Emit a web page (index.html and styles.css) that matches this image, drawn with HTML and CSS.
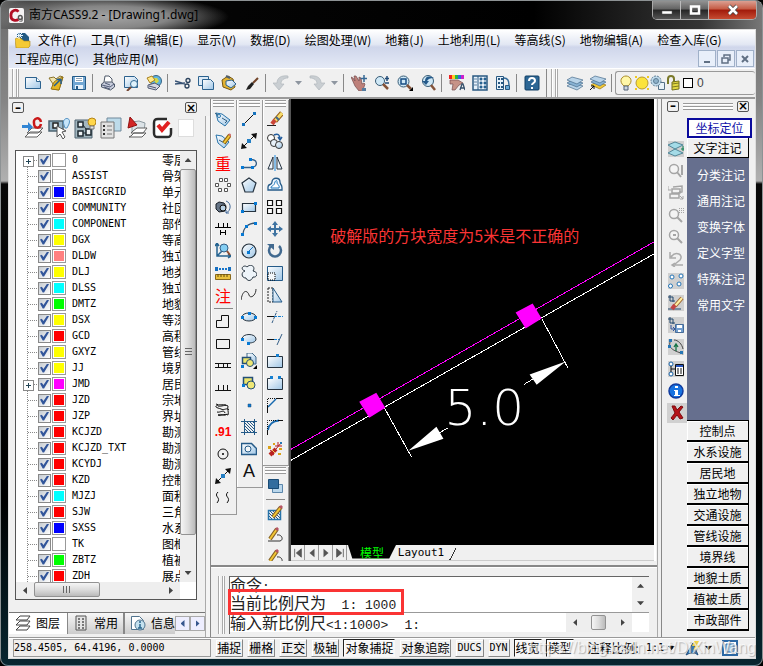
FILE: index.html
```html
<!DOCTYPE html>
<html lang="zh-CN">
<head>
<meta charset="utf-8">
<title>南方CASS9.2 - [Drawing1.dwg]</title>
<link rel="stylesheet" href="styles.css">
</head>
<body>
<svg class="sprite" width="0" height="0" aria-hidden="true">
  <defs>
    <linearGradient id="gl" x1="0" y1="0" x2="1" y2="1"><stop offset="0" stop-color="#ffffff"/><stop offset="1" stop-color="#9fc6e6"/></linearGradient>
    <linearGradient id="gy" x1="0" y1="0" x2="1" y2="1"><stop offset="0" stop-color="#fff3a0"/><stop offset="1" stop-color="#d8a818"/></linearGradient>
    <pattern id="hatch" width="3" height="3" patternUnits="userSpaceOnUse"><path d="M0 0l3 3" stroke="#245a88" stroke-width="1"/></pattern>
  </defs>
  <symbol id="new" viewBox="0 0 16 16"><path d="M.5 2.500h11l4 4v7H.5z" fill="url(#gl)" stroke="#2c628f"/><path d="M11.500 2.500v4h4" fill="#fff" stroke="#2c628f"/></symbol>
  <symbol id="open" viewBox="0 0 16 16"><path d="M1 3l5-1 2 2 4-3 3 1-4 13-7-1 1-5z" fill="#f1e5ae" stroke="#8a732c"/><path d="M3 14l3-7 4-3 5-2-4 13z" fill="#e5b622" stroke="#8d6a0e" stroke-width=".8"/><path d="M6 11l6-6M8.500 4.500H13V9" fill="none" stroke="#225e94" stroke-width="1.500"/></symbol>
  <symbol id="save" viewBox="0 0 16 16"><path d="M1.500 1.500h13v13h-13z" fill="#72a7d3" stroke="#235a87"/><path d="M4 2h8v5H4z" fill="#fff"/><path d="M5 3.500h6M5 5.500h6" stroke="#8fa4b5"/><path d="M4 10h8v4H4z" fill="#e7f2fb"/><path d="M5 11h2v3H5z" fill="#235a87"/></symbol>
  <symbol id="print" viewBox="0 0 16 16"><path d="M4 7l1-6h4l3 3v4" fill="#fff" stroke="#4e5969"/><path d="M1.500 9l3-2h7l3 2v3l-4 3-9-3z" fill="#c9cedd" stroke="#4e5969"/><path d="M2 10l8 2 4-3M4 12l6 2M5 8l5 2" fill="none" stroke="#525c78"/></symbol>
  <symbol id="preview" viewBox="0 0 16 16"><path d="M1.500 1.500h10l3 3v8h-13z" fill="url(#gl)" stroke="#2c628f"/><circle cx="11" cy="9" r="3.500" fill="#dff2fc" stroke="#346a93"/><path d="M8 12l-4 4" stroke="#754632" stroke-width="2"/></symbol>
  <symbol id="publish" viewBox="0 0 16 16"><circle cx="10" cy="6" r="5.500" fill="#5fb2dc" stroke="#386485"/><path d="M7 3l4 0 2 3-3 3" fill="#d2d846"/><path d="M1 3l5-2 3 4-5 3z" fill="#ffe98b" stroke="#a9811f"/><path d="M2 10l7-2 5 3-4 4-8-2z" fill="#d5d7e2" stroke="#4d5770"/><path d="M3 11l7 2" stroke="#4d5770"/></symbol>
  <symbol id="cut" viewBox="0 0 16 16"><path d="M0 6l10 3M0 9l10-1" stroke="#385375" stroke-width="1.500"/><circle cx="13" cy="5.500" r="2" fill="none" stroke="#29415c" stroke-width="1.300"/><circle cx="12" cy="11" r="2" fill="none" stroke="#29415c" stroke-width="1.300"/></symbol>
  <symbol id="copy" viewBox="0 0 16 16"><path d="M.5 1.500h10v9H.5z" fill="#dceaf6" stroke="#2c628f"/><path d="M4.500 4.500h8l3 3v7h-11z" fill="url(#gl)" stroke="#2c628f"/></symbol>
  <symbol id="paste" viewBox="0 0 16 16"><path d="M1 5l6-4 5 3 2 8-4 3-8-3z" fill="#e3b332" stroke="#775711"/><path d="M5 1l4 2" stroke="#506070" stroke-width="2"/><path d="M5 6l6-1 4 4-5 4-5-3z" fill="url(#gl)" stroke="#2c628f"/></symbol>
  <symbol id="brush" viewBox="0 0 16 16"><path d="M14 3L9 8" stroke="#714429" stroke-width="2"/><path d="M8 7l2 2-4 5-4 1 2-4z" fill="#202020"/></symbol>
  <symbol id="undo" viewBox="0 0 16 16"><path d="M15 1C8 0 4 3 4 8H0l6 7 5-6H8c0-4 3-6 7-6z" fill="#c9ced2" stroke="#b2b8bd" stroke-width=".7"/></symbol>
  <symbol id="redo" viewBox="0 0 16 16"><path d="M1 1c7-1 11 2 11 7h4l-6 7-5-6h3c0-4-3-6-7-6z" fill="#c9ced2" stroke="#b2b8bd" stroke-width=".7"/></symbol>
  <symbol id="pan" viewBox="0 0 16 16"><path d="M0 2l2 1 2 3L3 1h2l3 5V2l2 1 1 6 2-1 1 1-2 6-4 1-4-5z" fill="#bd807a" stroke="#744c4d" stroke-width=".7"/><path d="M13 0v7M9.500 3.500h7" stroke="#356895" stroke-width="1.500"/><path d="M11 13l4 0v3h-4z" fill="#537ca0"/></symbol>
  <symbol id="zoomrt" viewBox="0 0 16 16"><circle cx="6" cy="6" r="4.500" fill="#cfe8f6" stroke="#385c76"/><path d="M9 9l5 5" stroke="#845339" stroke-width="2.500"/><path d="M13 1v5M11 3.500h4M11 8h4" stroke="#214b78" stroke-width="1.500"/></symbol>
  <symbol id="zoomwin" viewBox="0 0 16 16"><circle cx="6.500" cy="6.500" r="5.500" fill="#cfe8f6" stroke="#385c76"/><path d="M4 4h5v5H4z" fill="none" stroke="#174c83" stroke-width="1.500"/><path d="M10 10l4 4" stroke="#845339" stroke-width="2.500"/><path d="M16 12v4h-4z" fill="#000"/></symbol>
  <symbol id="zoomprev" viewBox="0 0 16 16"><circle cx="8" cy="6" r="5.500" fill="#cfe8f6" stroke="#385c76"/><path d="M14 3C8 0 5 2 5 6H2l4 4 3-4H7c1-2 3-3 7-3z" fill="#245a8a"/><path d="M11 10l4 5" stroke="#845339" stroke-width="2.500"/></symbol>
  <symbol id="props" viewBox="0 0 16 16"><path d="M0 0h3v4H0z" fill="#e22"/><path d="M3 0h3v4H3z" fill="#fc2"/><path d="M6 0h3v4H6z" fill="#2b4"/><path d="M9 0h3v4H9z" fill="#36d"/><path d="M12 0h3v4h-3z" fill="#c2c"/><path d="M1 5h8l5 3-4 2-4 5H3l1-6-3 0z" fill="#c79387" stroke="#744c4d" stroke-width=".7"/><path d="M11 15l2-6h1l2 6m-5-2h4" fill="none" stroke="#35506b" stroke-width="1.300"/></symbol>
  <symbol id="dcenter" viewBox="0 0 16 16"><path d="M1 1h14v14H1z" fill="#e6f2fb" stroke="#285881" stroke-width="1.500"/><path d="M6 1v14" stroke="#285881"/><path d="M2 4h3M2 7h3M2 10h3M8 3h2v2H8zm4 0h2v2h-2zM8 7h2v2H8zm4 0h2v2h-2zM8 11h2v2H8zm4 0h2v2h-2z" fill="#2370a5" stroke="#285881" stroke-width=".7"/></symbol>
  <symbol id="palettes" viewBox="0 0 16 16"><path d="M1.500 1.500h7v13h-7z" fill="#e6f2fb" stroke="#285881"/><path d="M3 4h2M3 8h2M3 12h2M6 4h2M6 8h2M6 12h2" stroke="#285881" stroke-width="2"/><path d="M9 3c4 0 5 3 5 7" fill="none" stroke="#346c9a" stroke-width="1.500"/><path d="M10.500 10.500h4v4h-4z" fill="#69a9d4" stroke="#285881"/></symbol>
  <symbol id="help" viewBox="0 0 16 16"><rect x="1" y="1" width="14" height="14" rx="1" fill="#2d6795" stroke="#103e65"/><path d="M5 6c0-4 6-4 6 0 0 2-3 2-3 4" fill="none" stroke="#fff" stroke-width="2"/><path d="M7 12h2v2H7z" fill="#fff"/></symbol>
  <symbol id="layers" viewBox="0 0 16 16"><path d="M0 11l5-3 11 3-6 4z" fill="#b9d4e9" stroke="#496d8d" stroke-width=".7"/><path d="M0 8l5-3 11 3-6 4z" fill="#87b2d3" stroke="#496d8d" stroke-width=".7"/><path d="M0 5l5-3 11 3-6 4z" fill="#b9d4e9" stroke="#496d8d" stroke-width=".7"/></symbol>
  <symbol id="layerstate" viewBox="0 0 16 16"><path d="M1 10l5-3 10 3-6 4z" fill="#f5c933" stroke="#957514" stroke-width=".7"/><path d="M1 7l5-3 10 3-6 4z" fill="#87b2d3" stroke="#496d8d" stroke-width=".7"/><path d="M0 4l5-3 11 3-6 4z" fill="#b9d4e9" stroke="#496d8d" stroke-width=".7"/><path d="M0 15l4-4m-3 0h3v3" stroke="#111" fill="none"/></symbol>
  <symbol id="bulb" viewBox="0 0 16 16"><path d="M6 11C0 6 4 1 8 1s8 5 2 10z" fill="#fff7a8" stroke="#a88b28"/><path d="M6 11h4v4H6z" fill="#cfd8e1" stroke="#526276"/></symbol>
  <symbol id="sun" viewBox="0 0 16 16"><path d="M1 1h2v2H1zm12 0h2v2h-2zM1 13h2v2H1zm12 0h2v2h-2z" fill="#f0ca20"/><circle cx="8" cy="8" r="6" fill="#fbe33c" stroke="#b89b31"/></symbol>
  <symbol id="freeze" viewBox="0 0 16 16"><path d="M8.500 7.500h6v7h-6z" fill="#e9f2f8" stroke="#547087"/><circle cx="6" cy="6" r="5" fill="#bdd9eb" stroke="#5e7d94" stroke-dasharray="2 1"/><circle cx="6" cy="6" r="2.500" fill="#8db1c9" stroke="#5e7d94"/></symbol>
  <symbol id="lock" viewBox="0 0 16 16"><path d="M2 9V4c0-4 6-4 6 0v4" fill="none" stroke="#7a792a" stroke-width="2"/><path d="M6 7l7-1v8l-7 1z" fill="#e2d843" stroke="#74711c"/><path d="M6 9l7-1M6 12l7-1" stroke="#807c23"/></symbol>

  <symbol id="tag" viewBox="0 0 16 16"><path d="M1 2l6 1 8 6-5 6-7-5z" fill="url(#gl)" stroke="#2874aa"/><circle cx="4" cy="5" r="1.500" fill="#fff" stroke="#2874aa"/><path d="M7 7l5 3-2 2M0 2l3 2" fill="none" stroke="#315d7d"/></symbol>
  <symbol id="tagedit" viewBox="0 0 16 16"><path d="M1 2l6 1 7 6-5 6-6-5z" fill="url(#gl)" stroke="#2874aa"/><path d="M4 7l7 4" stroke="#315d7d"/><path d="M15 2L9 10" stroke="#8c620c" stroke-width="4"/><path d="M15 2L9 10" stroke="#f2c635" stroke-width="2"/><path d="M14 1l2 2" stroke="#cf6d6c" stroke-width="2"/></symbol>
  <symbol id="ring" viewBox="0 0 16 16"><path d="M4.500 1.500h3v3h-3zm5 0h3v3h-3zM.5 6.500h3v3h-3zm12 0h3v3h-3zM3.500 11.500h3v3h-3zm6 0h3v3h-3z" fill="#fff" stroke="#555"/></symbol>
  <symbol id="camera" viewBox="0 0 16 16"><path d="M1 5l3-2 5 1 2 3-1 5-6 1-3-3z" fill="#657486" stroke="#171d25"/><circle cx="8" cy="9" r="3" fill="#b9d2e6" stroke="#111"/><path d="M11 2c6 2 5 10 0 12m0-3v3h3" fill="none" stroke="#456b9a"/></symbol>
  <symbol id="spacing" viewBox="0 0 16 16"><path d="M0 6.500h16M3.500 2v5M8.500 2v5M12.500 2v5M5.500 9v5M10.500 9v5M5 11.500h6" stroke="#000" fill="none"/></symbol>
  <symbol id="ucszoom" viewBox="0 0 16 16"><path d="M2 1v12h13M0 3l2-3 2 3m9 8l3 2-3 2M2 13l6-6" stroke="#246390" fill="none" stroke-width="1.500"/><circle cx="9" cy="5" r="4" fill="#83cef3" stroke="#345e85"/><path d="M12 8l3 4" stroke="#8e4f34" stroke-width="2"/></symbol>
  <symbol id="ruler" viewBox="0 0 16 16"><path d="M1 4h14" stroke="#1474cb" stroke-width="2" stroke-dasharray="2 1"/><path d="M0 2h3v4H0zM13 2h3v4h-3z" fill="#176fc0"/><path d="M.5 9.500h15v5H.5z" fill="#ebc23d" stroke="#89691b"/><path d="M3 9v3m3-3v3m3-3v3m3-3v3" stroke="#654c0a"/></symbol>
  <symbol id="lshape" viewBox="0 0 16 16"><path d="M1.500 6.500h5v-5h7v12h-12z" fill="none" stroke="#111"/></symbol>
  <symbol id="box" viewBox="0 0 16 16"><path d="M1.500 3.500h13v9h-13z" fill="none" stroke="#111"/></symbol>
  <symbol id="rail" viewBox="0 0 16 16"><path d="M0 5.500h16M0 9.500h16M3.500 5v5M8.500 5v5M12.500 5v5" stroke="#111" fill="none"/></symbol>
  <symbol id="ticks" viewBox="0 0 16 16"><path d="M0 10.500h16M3.500 5v5M8.500 5v5M12.500 5v5" stroke="#111" fill="none"/></symbol>
  <symbol id="scribble" viewBox="0 0 16 16"><path d="M1 2c3 2 7 0 10 1M3 4c3 1 8-2 10 0-1 3 1 6 0 9-4-2-7 2-10 0 4-2 6 2 9-1M3 3c-5 2 0 3 3 4 3 2 6-2 8 1M2 10c3 1 7-3 8 1" stroke="#111" fill="none"/></symbol>
  <symbol id="pointcircle" viewBox="0 0 16 16"><circle cx="8" cy="8" r="5" fill="none" stroke="#111"/><circle cx="8" cy="8" r="1" fill="#000"/></symbol>
  <symbol id="xline" viewBox="0 0 16 16"><path d="M1 15L15 1" stroke="#111"/><path d="M0 16l1-6 5 5zM16 0l-1 6-5-5z" fill="#111"/><path d="M6 6h4v4H6z" fill="#247fc4"/></symbol>
  <symbol id="wave" viewBox="0 0 16 16"><path d="M3 2c-5 5 4 5-1 11M13 2c-5 5 4 5-1 11" stroke="#111" fill="none"/></symbol>
  <symbol id="line" viewBox="0 0 16 16"><path d="M2 14L14 2" stroke="#111"/><path d="M1 12h3v3H1zM12 1h3v3h-3z" fill="#1773be"/></symbol>
  <symbol id="pline" viewBox="0 0 16 16"><path d="M2 12.500h9c6-1 6-8-1-8" stroke="#365f87" stroke-width="1.300" fill="none"/><path d="M0 11h3v3H0zM10 11h3v3h-3zM8 3h3v3H8z" fill="#0779d4"/></symbol>
  <symbol id="polygon" viewBox="0 0 16 16"><path d="M8 1l7 5-3 9H4L1 6z" fill="url(#gl)" stroke="#26333f" stroke-width="1.200"/></symbol>
  <symbol id="rect" viewBox="0 0 16 16"><path d="M1.500 4.500h13v8h-13z" fill="url(#gl)" stroke="#26333f" stroke-width="1.200"/><path d="M0 11h3v3H0zM13 3h3v3h-3z" fill="#0779d4"/></symbol>
  <symbol id="arc" viewBox="0 0 16 16"><path d="M2 14C2 7 7 2 15 2" fill="none" stroke="#38536d" stroke-width="1.300"/><path d="M0 12h3v3H0zM4 4h3v3H4zM13 1h3v3h-3z" fill="#0779d4"/></symbol>
  <symbol id="circle" viewBox="0 0 16 16"><circle cx="8" cy="8" r="7" fill="url(#gl)" stroke="#26333f" stroke-width="1.200"/><path d="M7 9l5-5" stroke="#1773be"/><path d="M6 8h3v3H6z" fill="#0779d4"/></symbol>
  <symbol id="cloud" viewBox="0 0 16 16"><path d="M4 6C-2 4 3-1 6 2c4-4 9 0 6 4 6 1 4 7 0 6-2 5-6 4-7 1-5 0-5-6-1-7z" fill="#eef4f9" stroke="#26333f"/></symbol>
  <symbol id="spline" viewBox="0 0 16 16"><path d="M0 13C2 1 7 4 8 8s7 1 7-6" fill="none" stroke="#333"/></symbol>
  <symbol id="ellipse" viewBox="0 0 16 16"><ellipse cx="8" cy="8" rx="7" ry="4" fill="url(#gl)" stroke="#26333f"/><path d="M0 7h3v3H0zM13 7h3v3h-3zM7 3h3v3H7z" fill="#0779d4"/></symbol>
  <symbol id="ellarc" viewBox="0 0 16 16"><path d="M1 8c0-6 14-6 14 0 0 3-4 4-7 4" fill="url(#gl)" stroke="#26333f"/><path d="M0 7h3v3H0zM6 11h3v3H6z" fill="#0779d4"/></symbol>
  <symbol id="insert" viewBox="0 0 16 16"><path d="M6 0h5l4 4v7H6z" fill="url(#gl)" stroke="#406988"/><path d="M1.500 4.500h8v6h-8z" fill="#ece56a" stroke="#244f77" stroke-width="1.500"/><circle cx="9" cy="10" r="3.500" fill="#eee775" stroke="#244f77"/><path d="M0 12h3v3H0z" fill="#0779d4"/><path d="M16 12v4h-4z" fill="#000"/></symbol>
  <symbol id="block" viewBox="0 0 16 16"><path d="M2.500 2.500h9v7h-9z" fill="#ece56a" stroke="#244f77" stroke-width="1.500"/><circle cx="10" cy="10" r="4" fill="#eee775" stroke="#244f77"/><path d="M1 9h3v3H1z" fill="#0779d4"/></symbol>
  <symbol id="point" viewBox="0 0 16 16"><path d="M7 7h3v3H7z" fill="#0779d4" stroke="#244f77" stroke-width=".5"/></symbol>
  <symbol id="hatchicon" viewBox="0 0 16 16"><path d="M3 3h10v10H3z" fill="url(#hatch)"/><path d="M0 2.500h16M0 13.500h16M3.500 0v16M13.500 0v16" stroke="#245a88"/></symbol>
  <symbol id="region" viewBox="0 0 16 16"><path d="M.5 2.500h10l5 5v6H.5z" fill="url(#gl)" stroke="#245a88" stroke-width="1.500"/><circle cx="7" cy="8" r="3" fill="#f3f7fa" stroke="#245a88"/></symbol>
  <symbol id="erase" viewBox="0 0 16 16"><path d="M0 14.500h9" stroke="#222"/><path d="M15 2l-7 8" stroke="#965e15" stroke-width="5"/><path d="M15 2l-7 8" stroke="#f7dc69" stroke-width="3"/><path d="M8 9l-3 4" stroke="#ca4537" stroke-width="4"/><path d="M9 6l3 3" stroke="#43698e" stroke-width="2"/></symbol>
  <symbol id="copyobj" viewBox="0 0 16 16"><circle cx="4" cy="5" r="3.500" fill="#fff" stroke="#333"/><circle cx="7" cy="10" r="3.500" fill="#e8f1f9" stroke="#333"/><circle cx="12" cy="12" r="3.500" fill="url(#gl)" stroke="#333"/><path d="M7 2c4-2 6 0 6 4m-2-2l2 3 2-3" fill="none" stroke="#235d9d" stroke-width="1.500"/></symbol>
  <symbol id="mirror" viewBox="0 0 16 16"><path d="M6 2v12H1zM10 2v12h5z" fill="#eef6ff" stroke="#26333f"/><path d="M8 0v16" stroke="#1b88df"/></symbol>
  <symbol id="offset" viewBox="0 0 16 16"><path d="M1 13V10c0-4 4-1 4-5 0-5 8-5 8 0 0 3 2 2 2 6v2z" fill="#eef6ff" stroke="#245a88" stroke-width="1.300"/><path d="M4 11c0-3 3-1 4-6 1-2 2-2 2 0 0 4 3 2 2 6z" fill="#fff" stroke="#1975bc"/></symbol>
  <symbol id="array" viewBox="0 0 16 16"><path d="M.5 1.500h5v5h-5zm9 0h5v5h-5zm-9 8h5v5h-5zm9 0h5v5h-5z" fill="#fff" stroke="#111" stroke-width="1.200"/></symbol>
  <symbol id="move" viewBox="0 0 16 16"><path d="M8 0l3 4H9v3h3V5l4 3-4 3V9H9v3h2l-3 4-3-4h2V9H4v2L0 8l4-3v2h3V4H5z" fill="#3e73a1"/></symbol>
  <symbol id="rotate" viewBox="0 0 16 16"><path d="M4 3a6 6 0 1 0 8 0" fill="none" stroke="#41698f" stroke-width="2.500"/><path d="M0 1h7v6z" fill="#41698f"/></symbol>
  <symbol id="scale" viewBox="0 0 16 16"><path d="M.5 1.500h15v14H.5z" fill="url(#gl)" stroke="#245a88"/><path d="M1 8h7v7H1z" fill="#f3f7fa" stroke="#000" stroke-dasharray="1 1"/></symbol>
  <symbol id="stretch" viewBox="0 0 16 16"><path d="M1 1h5v14H1z" fill="none" stroke="#222" stroke-dasharray="2 1"/><path d="M6 1l9 14H6z" fill="url(#gl)" stroke="#245a88"/></symbol>
  <symbol id="trim" viewBox="0 0 16 16"><path d="M0 7.500h7" stroke="#111"/><path d="M7 7.500h9" stroke="#1680d1" stroke-dasharray="3 1"/><path d="M5 14l5-12" stroke="#365f87" stroke-dasharray="3 1"/></symbol>
  <symbol id="extend" viewBox="0 0 16 16"><path d="M0 8.500h7" stroke="#111"/><path d="M7 8.500h5" stroke="#1680d1" stroke-dasharray="3 1"/><path d="M10 14l5-11" stroke="#365f87"/></symbol>
  <symbol id="breakpt" viewBox="0 0 16 16"><path d="M.5 3.500h15v11H.5z" fill="url(#gl)" stroke="#26333f"/><path d="M9 1h3v3H9z" fill="#1680d1"/></symbol>
  <symbol id="break" viewBox="0 0 16 16"><path d="M3 3.500H.5v11h15v-11H13" fill="url(#gl)" stroke="#26333f"/><path d="M3 1h3v3H3zM11 1h3v3h-3z" fill="#1680d1"/></symbol>
  <symbol id="chamfer" viewBox="0 0 16 16"><path d="M1 10l8-8" fill="none" stroke="#1769ae" stroke-width="1.500"/><path d="M.5 16V9M9 1.500h7" stroke="#111"/><path d="M.5 9V1.500H9" fill="none" stroke="#111" stroke-dasharray="1 1"/></symbol>
  <symbol id="fillet" viewBox="0 0 16 16"><path d="M1 11C2 5 5 2 12 1.500" fill="none" stroke="#1769ae" stroke-width="1.800"/><path d="M.5 16v-5M11 1.500h5" stroke="#111"/><path d="M.5 10V1.500H9" fill="none" stroke="#111" stroke-dasharray="1 1"/></symbol>
  <symbol id="explode" viewBox="0 0 16 16"><path d="M3 14l6-6" stroke="#bc261e" stroke-width="4"/><path d="M1 5h3v3H1zM6 2h2v2H6zM12 7h3v2h-3zM11 12h3v2h-3z" fill="#dba117"/><path d="M9 8l5-6M11 1v4M8 5h7M4 12l3 2M3 9l4 3" stroke="#b51b23"/><path d="M5 9l3 3" stroke="#f5d05c"/><path d="M13 1h2v2h-2z" fill="#2478b5"/></symbol>
  <symbol id="order" viewBox="0 0 16 16"><path d="M5.500 6.500h10v8h-10z" fill="#bad7ec" stroke="#5b86aa"/><path d="M1.500 1.500h10v9h-10z" fill="#336d9e" stroke="#194b75"/></symbol>
  <symbol id="hatchedit" viewBox="0 0 16 16"><path d="M1.500 5.500h12v9h-12z" fill="url(#hatch)" stroke="#2874aa" stroke-width="1.500"/><path d="M14 2L6 12" stroke="#846124" stroke-width="4"/><path d="M14 2L6 12" stroke="#f2c635" stroke-width="2"/><path d="M13 1l2 2" stroke="#b65565" stroke-width="3"/></symbol>
  <symbol id="pedit" viewBox="0 0 16 16"><path d="M1 14h12c4-1 2-7-3-6" fill="none" stroke="#333"/><path d="M10 2L3 12" stroke="#846124" stroke-width="4"/><path d="M10 2L3 12" stroke="#f2c635" stroke-width="2"/><path d="M9 1l2 2" stroke="#b65565" stroke-width="3"/></symbol>

  <symbol id="layerc" viewBox="0 0 22 22"><path d="M6 15l4-4h11l-5 5H5zM4 19l4-4h12l-5 5H3z" fill="#fff" stroke="#606060"/><path d="M0 8h6V5l5 5-5 4v-3H0z" fill="#3185d4"/><path d="M19 5c-1-6-8-4-7 1 0 6 6 6 7 1" fill="none" stroke="#c91818" stroke-width="2.500"/></symbol>
  <symbol id="pickbulb" viewBox="0 0 22 22"><path d="M1 4h14v10H1z" fill="#9ab8cb" stroke="#4d6472" stroke-width="1.500"/><path d="M5 6h5v5H5z" fill="#f0f4f5" stroke="#222" stroke-width="1.500"/><path d="M9 9v11l3-3 3 5 2-2-3-5 4-1z" fill="#fff" stroke="#555"/><path d="M16 8c-3-8 8-9 5-1l-2 4h-2z" fill="#c6e5fa" stroke="#5290c0"/></symbol>
  <symbol id="boxbulb" viewBox="0 0 22 22"><path d="M1 3h17v18H1z" fill="#a3b7c0" stroke="#506572"/><path d="M4 5h5v5H4zM4 14h5v5H4zM12 12h5v6h-5z" fill="#edf2f4" stroke="#1d2930" stroke-width="1.500"/><path d="M9 8l3 4M9 16h3" stroke="#1d2930"/><circle cx="18" cy="5" r="4" fill="#ffd64a" stroke="#b48315"/><path d="M16 9h4v3h-4z" fill="#e1e1e1" stroke="#777"/></symbol>
  <symbol id="sheet" viewBox="0 0 22 22"><path d="M7 1h14v13H7z" fill="#bddbea" stroke="#71899b"/><path d="M1 5h13v16H1z" fill="#e2e2e2" stroke="#777"/><path d="M3 9h2M3 13h2M3 17h2" stroke="#333" stroke-width="2"/><path d="M7 9h5M7 13h5M7 17h5" stroke="#777"/></symbol>
  <symbol id="redlayer" viewBox="0 0 22 22"><path d="M6 5l7-1 6 2-1 9H6z" fill="#dce3e7" stroke="#8d9aa1"/><path d="M4 0l7 8-9 3z" fill="#d22626" stroke="#8f1212"/><path d="M7 14l4-3h10l-4 5H5zM5 19l3-3h12l-4 4H3z" fill="#fff" stroke="#606060"/></symbol>
  <symbol id="bigcheck" viewBox="0 0 22 22"><path d="M19 11v5c0 3-1 4-4 4H6c-3 0-4-1-4-4V6c0-3 1-4 4-4h9" fill="#fff" stroke="#2c2c2c" stroke-width="2.500"/><path d="M6 8l4 5 7-8" fill="none" stroke="#e12222" stroke-width="4"/></symbol>

  <symbol id="r1" viewBox="0 0 16 16"><path d="M0 0h16v16H0z" fill="#d0d0d0"/><path d="M0 4l7-3 8 3-8 4zM0 12l7-4 8 4-8 3z" fill="#a4dbe7" stroke="#528697"/><path d="M15 5v5M13 8h3" stroke="#0c8051"/></symbol>
  <symbol id="r2" viewBox="0 0 16 16"><circle cx="6" cy="6" r="4.500" fill="#f4f4f4" stroke="#a5a5a5" stroke-width="1.500"/><path d="M9 9l4 5M14 2v10" stroke="#a5a5a5" stroke-width="2"/></symbol>
  <symbol id="r3" viewBox="0 0 16 16"><path d="M5 2l9-1v6l-4 1M4 4h8v4H4zM2 9h9v4H2z" fill="#f4f4f4" stroke="#a5a5a5" stroke-width="1.500"/><path d="M0 1v4h3M12 11l3 3v-3m0 3h-3" stroke="#a5a5a5" fill="none"/></symbol>
  <symbol id="r4" viewBox="0 0 16 16"><circle cx="6" cy="7" r="4.500" fill="#f4f4f4" stroke="#a5a5a5" stroke-width="1.500"/><path d="M9 10l5 5" stroke="#a5a5a5" stroke-width="2"/><path d="M11 1.500h5M11 3.500h5M11 5.500h5" stroke="#a5a5a5" stroke-dasharray="1 1"/></symbol>
  <symbol id="r5" viewBox="0 0 16 16"><circle cx="6" cy="6" r="4.500" fill="#f4f4f4" stroke="#a5a5a5" stroke-width="1.500"/><path d="M9 9l5 5M5 6h3" stroke="#a5a5a5" stroke-width="2"/></symbol>
  <symbol id="r6" viewBox="0 0 16 16"><path d="M2 1v6h6M3 6c5-7 13-2 9 3l-5 4m8 1H4m3-2l-3 2 3 2" stroke="#aaa" stroke-width="1.500" fill="none"/></symbol>
  <symbol id="r7" viewBox="0 0 16 16"><path d="M0 0h16v16H0z" fill="#d0d0d0"/><g fill="#fff" stroke="#2474b6"><circle cx="4" cy="4" r="2"/><circle cx="13" cy="3" r="2"/><circle cx="2.500" cy="13" r="2"/><circle cx="11" cy="11" r="2"/></g></symbol>
  <symbol id="r8" viewBox="0 0 16 16"><path d="M0 0h16v16H0z" fill="#d0d0d0"/><path d="M2 0v6h5M0 2h5v5M0 14h13" fill="none" stroke="#21476c"/><path d="M14 3l-7 8" stroke="#9d6230" stroke-width="4"/><path d="M14 3l-7 8" stroke="#fff0a0" stroke-width="2"/><path d="M7 10l-3 4" stroke="#c24444" stroke-width="4"/></symbol>
  <symbol id="r9" viewBox="0 0 16 16"><path d="M0 0h16v16H0z" fill="#d0d0d0"/><path d="M2 0v6h5M0 2h5v5" fill="none" stroke="#21476c"/><path d="M3 8v4h4m-2-2l2 2-2 2" fill="none" stroke="#30539b"/><path d="M7.500 7.500h8v8h-8z" fill="#719dcf" stroke="#466b98"/><path d="M9 8h5v3H9zM10 13h3v2h-3z" fill="#fff"/></symbol>
  <symbol id="r10" viewBox="0 0 16 16"><path d="M0 0h16v16H0z" fill="#d0d0d0"/><path d="M3 1c-5 9 5 11 12 14M6 1c4 0 8 4 9 9" fill="none" stroke="#444"/><path d="M8 12V6M6 8l2-3 2 3" fill="none" stroke="#137344" stroke-width="1.300"/><path d="M1 0h3v3H1zM0 6h3v3H0zM12 12h3v3h-3z" fill="#2576b5"/></symbol>
  <symbol id="r11" viewBox="0 0 16 16"><path d="M0 0h16v16H0z" fill="#d0d0d0"/><circle cx="3" cy="3" r="2" fill="#fff" stroke="#1761a6"/><circle cx="3" cy="13" r="2" fill="#fff" stroke="#1761a6"/><path d="M3 5v6M3 8h5" stroke="#111"/><path d="M7.500 3.500h8v11h-8z" fill="#fff" stroke="#111"/><path d="M8 4h7v2H8z" fill="#2755bf"/><path d="M9 8h2m1 0h2M9 10h2m1 0h2M9 12h2m1 0h2" stroke="#111"/></symbol>
  <symbol id="r12" viewBox="0 0 16 16"><circle cx="8" cy="8" r="7" fill="#1773e1" stroke="#113b9e" stroke-width="1.500"/><path d="M7 3h3v2H7zM6 7h4v5h2v1H6v-1h1V8H6z" fill="#fff"/></symbol>
  <symbol id="r13" viewBox="0 0 20 20"><path d="M0 0h20v20H0z" fill="#d0d0d0"/><path d="M5 3l3 0 2 4 4-4 2 1-4 5 4 6-3 1-3-4-4 5-2-2 4-5z" fill="#b51318" stroke="#7e0b0e"/></symbol>
</svg>

<div class="window">
  <header class="titlebar">
    <svg class="app-icon" viewBox="0 0 16 16" aria-hidden="true"><rect width="16" height="16" rx="2" fill="#f4f2f3"/><path d="M10 4C8 1 2 2 2 8s6 6 8 4" fill="none" stroke="#b20d23" stroke-width="3"/><circle cx="12" cy="10" r="2" fill="none" stroke="#555" stroke-width="1.500"/><path d="M14 10v4h-3" fill="none" stroke="#555"/></svg>
    <h1>南方CASS9.2 - [Drawing1.dwg]</h1>
    <div class="caption">
      <button aria-label="最小化"><svg viewBox="0 0 12 12"><path d="M1 7h10v3H1z" fill="#fff" stroke="#555" stroke-width=".5"/></svg></button>
      <button aria-label="最大化"><svg viewBox="0 0 12 12"><path d="M2 2.500h8v7H2z" fill="none" stroke="#fff" stroke-width="2.500"/><path d="M4 5h4v2H4z" fill="#555"/></svg></button>
      <button class="close" aria-label="关闭"><svg viewBox="0 0 12 12"><path d="M2 2l8 8M10 2l-8 8" stroke="#444" stroke-width="4"/><path d="M2 2l8 8M10 2l-8 8" stroke="#fff" stroke-width="2.500"/></svg></button>
    </div>
  </header>

  <div class="client">
    <nav class="menubar">
      <svg class="doc-icon" viewBox="0 0 16 16" aria-hidden="true"><path d="M2 1h8l4 4v10H2z" fill="#245b84"/><path d="M0 7l4-2 5 4h6v5l-2 2H1z" fill="#f5ca34" stroke="#a9831c" stroke-width=".6"/><path d="M4 0v7M1 3.500h7M2 1l5 5M7 1L2 6" stroke="#e8f5ff"/></svg>
      <button>文件(F)</button><button>工具(T)</button><button>编辑(E)</button><button>显示(V)</button><button>数据(D)</button><button>绘图处理(W)</button><button>地籍(J)</button><button>土地利用(L)</button><button>等高线(S)</button><button>地物编辑(A)</button><button>检查入库(G)</button>
      <div class="second-row">
        <button>工程应用(C)</button><button>其他应用(M)</button>
        <div class="mdi"><button aria-label="最小化图形"><svg viewBox="0 0 12 12"><path d="M3 9h6" stroke="#607084" stroke-width="2"/></svg></button><button aria-label="还原图形"><svg viewBox="0 0 12 12"><path d="M4 4V2h6v5H8M2 5h6v5H2z" fill="none" stroke="#607084" stroke-width="1.500"/></svg></button><button aria-label="关闭图形"><svg viewBox="0 0 12 12"><path d="M3 3l6 6M9 3L3 9" stroke="#607084" stroke-width="2"/></svg></button></div>
      </div>
    </nav>

    <div class="toolbar">
      <i class="vgrip"></i>
      <button aria-label="新建"><svg><use href="#new"/></svg></button><button aria-label="打开"><svg><use href="#open"/></svg></button><button aria-label="保存"><svg><use href="#save"/></svg></button><i class="sep"></i>
      <button aria-label="打印"><svg><use href="#print"/></svg></button><button aria-label="预览"><svg><use href="#preview"/></svg></button><button aria-label="发布"><svg><use href="#publish"/></svg></button><i class="sep"></i>
      <button aria-label="剪切"><svg><use href="#cut"/></svg></button><button aria-label="复制"><svg><use href="#copy"/></svg></button><button aria-label="粘贴"><svg><use href="#paste"/></svg></button><button aria-label="特性匹配"><svg><use href="#brush"/></svg></button><i class="sep"></i>
      <button aria-label="放弃"><svg><use href="#undo"/></svg></button><button class="drop" aria-label="放弃列表"><i class="tri down"></i></button><button aria-label="重做"><svg><use href="#redo"/></svg></button><button class="drop" aria-label="重做列表"><i class="tri down"></i></button><i class="sep"></i>
      <button aria-label="平移"><svg><use href="#pan"/></svg></button><button aria-label="实时缩放"><svg><use href="#zoomrt"/></svg></button><button aria-label="窗口缩放"><svg><use href="#zoomwin"/></svg></button><button aria-label="缩放上一个"><svg><use href="#zoomprev"/></svg></button><i class="sep"></i>
      <button aria-label="特性"><svg><use href="#props"/></svg></button><button aria-label="设计中心"><svg><use href="#dcenter"/></svg></button><button aria-label="工具选项板"><svg><use href="#palettes"/></svg></button><i class="sep"></i>
      <button aria-label="帮助"><svg><use href="#help"/></svg></button><i class="bar-end"></i><i class="vgrip"></i>
      <button class="wide" aria-label="图层特性"><svg><use href="#layers"/></svg></button><button aria-label="图层状态"><svg><use href="#layerstate"/></svg></button><i class="sep"></i>
      <button class="layer-combo" aria-label="当前图层"><svg><use href="#bulb"/></svg><svg><use href="#sun"/></svg><svg><use href="#freeze"/></svg><svg><use href="#lock"/></svg><i class="white-box"></i><span>0</span></button>
    </div>

    <main class="workspace">
      <aside class="palette">
        <div class="palette-head"><button class="mini" aria-label="折叠">–</button><button class="mini" aria-label="关闭面板">×</button></div>
        <div class="palette-tools">
          <button aria-label="置为当前"><svg><use href="#layerc"/></svg></button><button aria-label="选择图层"><svg><use href="#pickbulb"/></svg></button><button aria-label="显示对象"><svg><use href="#boxbulb"/></svg></button><button aria-label="图层列表"><svg><use href="#sheet"/></svg></button><button aria-label="移动图层"><svg><use href="#redlayer"/></svg></button><button aria-label="全选"><svg><use href="#bigcheck"/></svg></button><i class="blank"></i>
        </div>
        <div class="tree">
          <ul>
            <li class="parent"><label><input type="checkbox" checked><i class="sw"></i><b>0</b></label><span>零层</span></li>
            <li><label><input type="checkbox" checked><i class="sw"></i><b>ASSIST</b></label><span>骨架</span></li>
            <li><label><input type="checkbox" checked><i class="sw blue"></i><b>BASICGRID</b></label><span>单元</span></li>
            <li><label><input type="checkbox" checked><i class="sw red"></i><b>COMMUNITY</b></label><span>社区</span></li>
            <li><label><input type="checkbox" checked><i class="sw cyan"></i><b>COMPONENT</b></label><span>部件</span></li>
            <li><label><input type="checkbox" checked><i class="sw yellow"></i><b>DGX</b></label><span>等高</span></li>
            <li><label><input type="checkbox" checked><i class="sw pink"></i><b>DLDW</b></label><span>独立</span></li>
            <li><label><input type="checkbox" checked><i class="sw yellow"></i><b>DLJ</b></label><span>地类</span></li>
            <li><label><input type="checkbox" checked><i class="sw cyan"></i><b>DLSS</b></label><span>独立</span></li>
            <li><label><input type="checkbox" checked><i class="sw green"></i><b>DMTZ</b></label><span>地貌</span></li>
            <li><label><input type="checkbox" checked><i class="sw yellow"></i><b>DSX</b></label><span>等深</span></li>
            <li><label><input type="checkbox" checked><i class="sw red"></i><b>GCD</b></label><span>高程</span></li>
            <li><label><input type="checkbox" checked><i class="sw yellow"></i><b>GXYZ</b></label><span>管线</span></li>
            <li><label><input type="checkbox" checked><i class="sw yellow"></i><b>JJ</b></label><span>境界</span></li>
            <li class="parent"><label><input type="checkbox" checked><i class="sw magenta"></i><b>JMD</b></label><span>居民</span></li>
            <li><label><input type="checkbox" checked><i class="sw red"></i><b>JZD</b></label><span>宗地</span></li>
            <li><label><input type="checkbox" checked><i class="sw red"></i><b>JZP</b></label><span>界址</span></li>
            <li><label><input type="checkbox" checked><i class="sw red"></i><b>KCJZD</b></label><span>勘测</span></li>
            <li><label><input type="checkbox" checked><i class="sw red"></i><b>KCJZD_TXT</b></label><span>勘测</span></li>
            <li><label><input type="checkbox" checked><i class="sw red"></i><b>KCYDJ</b></label><span>勘测</span></li>
            <li><label><input type="checkbox" checked><i class="sw red"></i><b>KZD</b></label><span>控制</span></li>
            <li><label><input type="checkbox" checked><i class="sw cyan"></i><b>MJZJ</b></label><span>面积</span></li>
            <li><label><input type="checkbox" checked><i class="sw red"></i><b>SJW</b></label><span>三角</span></li>
            <li><label><input type="checkbox" checked><i class="sw blue"></i><b>SXSS</b></label><span>水系</span></li>
            <li><label><input type="checkbox" checked><i class="sw"></i><b>TK</b></label><span>图框</span></li>
            <li><label><input type="checkbox" checked><i class="sw green"></i><b>ZBTZ</b></label><span>植被</span></li>
            <li><label><input type="checkbox" checked><i class="sw red"></i><b>ZDH</b></label><span>展点</span></li>
          </ul>
          <div class="vscroll"><button aria-label="向上"><i class="tri up"></i></button><i class="thumb"></i><button class="end" aria-label="向下"><i class="tri down"></i></button></div>
          <div class="hscroll"><button aria-label="向左"><i class="tri left"></i></button><i class="thumb"></i><button class="end" aria-label="向右"><i class="tri right"></i></button></div>
        </div>
        <div class="palette-tabs">
          <button class="on"><svg viewBox="0 0 16 16"><path d="M1 5l4-4h10l-3 4zM1 10l4-4h10l-3 4zM1 15l4-4h10l-3 4z" fill="#fff" stroke="#444"/></svg>图层</button>
          <button><svg viewBox="0 0 16 16"><path d="M3 1h10v14H3z" fill="#e4e4e4" stroke="#555"/><path d="M5 4h2m2 0h2M5 7h2m2 0h2M5 10h2m2 0h2M5 13h2m2 0h2" stroke="#555" stroke-width="1.500"/></svg>常用</button>
          <button><svg viewBox="0 0 16 16"><path d="M1.500 1.500h8l4 4v9h-12z" fill="#fff" stroke="#51748e"/><circle cx="10" cy="10" r="5" fill="#c4e1ef" stroke="#51748e"/><path d="M10 6v2m0 1v4M8 13h4" stroke="#28658d" stroke-width="1.500"/></svg>信息</button>
          <div class="tab-nav"><button aria-label="上一页"><i class="tri left"></i></button><button aria-label="下一页"><i class="tri right"></i></button></div>
        </div>
      </aside>

      <section class="center">
        <div class="stage">
          <div class="tools"><div class="strip"><i class="hgrip"></i>
            <button aria-label="标注"><svg><use href="#tag"/></svg></button><button aria-label="编辑标注"><svg><use href="#tagedit"/></svg></button><button class="glyph">重</button><button aria-label="环形点"><svg><use href="#ring"/></svg></button><button aria-label="相机"><svg><use href="#camera"/></svg></button><button aria-label="间距"><svg><use href="#spacing"/></svg></button><button aria-label="坐标查询"><svg><use href="#ucszoom"/></svg></button><button aria-label="量距"><svg><use href="#ruler"/></svg></button><button class="glyph">注</button><i class="hsep"></i>
            <button aria-label="多点房屋"><svg><use href="#lshape"/></svg></button><button aria-label="四点房屋"><svg><use href="#box"/></svg></button><button aria-label="围墙"><svg><use href="#rail"/></svg></button><button aria-label="陡坎"><svg><use href="#ticks"/></svg></button><button aria-label="斜坡"><svg><use href="#scribble"/></svg></button><button class="glyph num">.91</button><button aria-label="控制点"><svg><use href="#pointcircle"/></svg></button><button aria-label="交会"><svg><use href="#xline"/></svg></button><button aria-label="曲线"><svg><use href="#wave"/></svg></button>
          </div></div>
          <div class="tools"><div class="strip"><i class="hgrip"></i>
            <button aria-label="直线"><svg><use href="#line"/></svg></button><button aria-label="构造线"><svg><use href="#xline"/></svg></button><button aria-label="多段线"><svg><use href="#pline"/></svg></button><button aria-label="正多边形"><svg><use href="#polygon"/></svg></button><button aria-label="矩形"><svg><use href="#rect"/></svg></button><button aria-label="圆弧"><svg><use href="#arc"/></svg></button><button aria-label="圆"><svg><use href="#circle"/></svg></button><button aria-label="云线"><svg><use href="#cloud"/></svg></button><button aria-label="样条曲线"><svg><use href="#spline"/></svg></button><button aria-label="椭圆"><svg><use href="#ellipse"/></svg></button><button aria-label="椭圆弧"><svg><use href="#ellarc"/></svg></button><button aria-label="插入块"><svg><use href="#insert"/></svg></button><button aria-label="创建块"><svg><use href="#block"/></svg></button><button aria-label="点"><svg><use href="#point"/></svg></button><button aria-label="图案填充"><svg><use href="#hatchicon"/></svg></button><button aria-label="面域"><svg><use href="#region"/></svg></button><button class="glyph letter">A</button>
          </div></div>
          <div class="tools"><div class="strip"><i class="hgrip"></i>
            <button aria-label="删除"><svg><use href="#erase"/></svg></button><button aria-label="复制对象"><svg><use href="#copyobj"/></svg></button><button aria-label="镜像"><svg><use href="#mirror"/></svg></button><button aria-label="偏移"><svg><use href="#offset"/></svg></button><button aria-label="阵列"><svg><use href="#array"/></svg></button><button aria-label="移动"><svg><use href="#move"/></svg></button><button aria-label="旋转"><svg><use href="#rotate"/></svg></button><button aria-label="比例"><svg><use href="#scale"/></svg></button><button aria-label="拉伸"><svg><use href="#stretch"/></svg></button><button aria-label="修剪"><svg><use href="#trim"/></svg></button><button aria-label="延伸"><svg><use href="#extend"/></svg></button><button aria-label="打断于点"><svg><use href="#breakpt"/></svg></button><button aria-label="打断"><svg><use href="#break"/></svg></button><button aria-label="倒角"><svg><use href="#chamfer"/></svg></button><button aria-label="圆角"><svg><use href="#fillet"/></svg></button><button aria-label="分解"><svg><use href="#explode"/></svg></button>
            </div><div class="strip"><i class="hgrip"></i><button aria-label="绘图次序"><svg><use href="#order"/></svg></button><i class="hsep"></i><button aria-label="编辑填充"><svg><use href="#hatchedit"/></svg></button><button aria-label="编辑多段线"><svg><use href="#pedit"/></svg></button><button aria-label="编辑样条"><svg><use href="#pedit"/></svg></button>
          </div></div>
          <div class="viewport">
            <svg class="drawing" viewBox="0 0 364 445" preserveAspectRatio="xMidYMid slice" role="img" aria-label="图形">
              <g fill="none" stroke="#fff" shape-rendering="crispEdges">
                <path d="M0 361L364 154M94 308l27 49M251 219l26 49M149 333l9-5M243 279l-10 6"/>
                <path d="M0 350L364 142" stroke="#f0f"/>
              </g>
              <path d="M69 302l17-9 9 15-16 10zM225 213l17-9 9 15-16 10z" fill="#f0f"/>
              <path d="M118 351l28-24 7 12zM275 262l-36 13 7 10z" fill="#fff"/>
              <text class="dim" x="154" y="325">5.0</text>
              <text class="note" x="40" y="143">破解版的方块宽度为5米是不正确的</text>
            </svg>
            <div class="layout-tabs">
              <button aria-label="第一个"><svg viewBox="0 0 12 12"><path d="M2 1v10M10 1v10L4 6z" fill="#555" stroke="#555"/></svg></button><button aria-label="上一个"><svg viewBox="0 0 12 12"><path d="M9 1v10L3 6z" fill="#555"/></svg></button><button aria-label="下一个"><svg viewBox="0 0 12 12"><path d="M3 1v10l6-5z" fill="#555"/></svg></button><button aria-label="最后一个"><svg viewBox="0 0 12 12"><path d="M10 1v10M2 1v10l6-5z" fill="#555" stroke="#555"/></svg></button>
              <button class="model">模型</button><button class="layout">Layout1</button>
            </div>
          </div>
        </div>
        <div class="command">
          <i class="vgrip"></i>
          <div class="console">
            <div class="history">
              <div class="log"><p>命令<span>:</span></p><p>当前比例尺为<span>&nbsp; 1: 1000</span></p></div>
              <div class="log-scroll"><button aria-label="历史向上"><i class="tri up"></i></button><button aria-label="历史向下"><i class="tri down"></i></button></div>
            </div>
            <div class="entry">
              <label for="cmd">输入新比例尺<span>&lt;1:1000&gt;</span></label><input id="cmd" type="text" value="1:">
              <div class="entry-scroll"><button aria-label="命令向左"><i class="tri left"></i></button><i class="thumb"></i><button aria-label="命令向右"><i class="tri right"></i></button></div>
            </div>
            <i class="highlight"></i>
          </div>
        </div>
      </section>

      <aside class="screen-menu">
        <div class="sm-head"><button class="mini" aria-label="折叠菜单">–</button><i class="hgrip"></i><button class="mini" aria-label="关闭菜单">×</button></div>
        <div class="sm-body">
          <div class="sm-icons">
            <button aria-label="图层叠加"><svg><use href="#r1"/></svg></button><button aria-label="缩放"><svg><use href="#r2"/></svg></button><button aria-label="视图"><svg><use href="#r3"/></svg></button><button aria-label="范围"><svg><use href="#r4"/></svg></button><button aria-label="放大"><svg><use href="#r5"/></svg></button><button aria-label="返回"><svg><use href="#r6"/></svg></button><button aria-label="展点"><svg><use href="#r7"/></svg></button><button aria-label="擦除"><svg><use href="#r8"/></svg></button><button aria-label="存盘"><svg><use href="#r9"/></svg></button><button aria-label="复合线"><svg><use href="#r10"/></svg></button><button aria-label="属性表"><svg><use href="#r11"/></svg></button><button aria-label="信息查询"><svg><use href="#r12"/></svg></button><button aria-label="取消"><svg class="big"><use href="#r13"/></svg></button>
          </div>
          <div class="sm-list">
            <button class="active">坐标定位</button><button class="raised">文字注记</button>
            <div class="sub"><button>分类注记</button><button>通用注记</button><button>变换字体</button><button>定义字型</button><button>特殊注记</button><button>常用文字</button></div>
            <button>控制点</button><button>水系设施</button><button>居民地</button><button>独立地物</button><button>交通设施</button><button>管线设施</button><button>境界线</button><button>地貌土质</button><button>植被土质</button><button>市政部件</button>
          </div>
        </div>
      </aside>
    </main>

    <footer class="status">
      <output>258.4505, 64.4196, 0.0000</output>
      <button>捕捉</button><button>栅格</button><button>正交</button><button>极轴</button><button class="pressed">对象捕捉</button><button>对象追踪</button><button class="en">DUCS</button><button class="en">DYN</button><button class="pressed">线宽</button><button class="pressed">模型</button>
      <span class="scale">注释比例:</span><button class="flat en">1:1<i class="tri down"></i></button>
      <button class="flat" aria-label="注释可见性"><svg viewBox="0 0 16 16"><path d="M1 15L8 3l5 12-3-2H5z" fill="#3778b5" stroke="#255280"/><path d="M9 1h5l-2 4 3 1-7 5 2-5H7z" fill="#f5d447"/></svg><i class="tri down"></i></button>
      <button class="flat clean" aria-label="全屏显示"><svg viewBox="0 0 16 16"><path d="M1 1h14v14H1z" fill="#fff" stroke="#2c69a5" stroke-width="2"/><path d="M4 4h8v8H4z" fill="#a5cce9" stroke="#2c69a5"/></svg></button>
    </footer>
  </div>
  <p class="watermark">https://blog.csdn.net/DiXinWang</p>
</div>
</body>
</html>
```
FILE: styles.css
```css
* { box-sizing: border-box; }
body { margin: 0; background: #000; font: 12px/16px "Liberation Sans", "Noto Sans CJK SC", sans-serif; color: #000; }
button, input { font: inherit; color: inherit; margin: 0; padding: 0; border: 0; background: none; white-space: nowrap; }
i, b { font-style: normal; font-weight: normal; }
p, h1, ul { margin: 0; padding: 0; }
.sprite { position: absolute; }
svg { display: block; flex: none; width: 16px; height: 16px; }

.window { position: relative; display: flex; flex-direction: column; height: 100vh; min-height: 560px; overflow: hidden; padding: 0 6px 6px 7px; border: 1px solid #8d9294; border-bottom-color: #718995; border-radius: 8px;
  background: linear-gradient(#6d6d6d 0, #858585 100px, #b0b0b0 180px, #080808 183px, #000 75%, #082630); }
.titlebar { display: flex; align-items: center; flex: none; height: 28px; margin: 0 -6px 0 -7px; padding-left: 8px; background: radial-gradient(ellipse 120px 22px at 108px 16px, #a4a4a4 0, #858585 50%, transparent 100%), linear-gradient(90deg, #666, #444 30px, #050505 160px, #000 70%, #353535 92%, #777); }
.app-icon { width: 15px; height: 15px; }
h1 { flex: 1; margin-left: 5px; font: 12px/16px "Noto Sans", "Noto Sans CJK SC", sans-serif; color: #000; }
.caption { display: flex; align-self: flex-start; height: 19px; margin-right: 5px; border: 1px solid #aaa; border-top: 0; border-radius: 0 0 5px 5px; overflow: hidden; }
.caption button { display: grid; place-items: center; width: 28px; background: linear-gradient(#929292, #626262 45%, #252525 50%, #555); border-right: 1px solid #bbb; }
.caption .close { width: 47px; border: 0; background: linear-gradient(#dba092, #c55a43 45%, #a11a0a 50%, #c64b32); }
.caption svg { width: 12px; height: 12px; }

.client { flex: 1; min-height: 0; display: flex; flex-direction: column; background: #f0f0f0; border: 1px solid #ddd; }
.menubar { flex: none; display: flex; flex-wrap: wrap; align-items: center; column-gap: 14px; height: 38px; padding-left: 6px; background: linear-gradient(#fff, #e2e7f3 38%, #cfd6eb 45%, #e5eaf6); font-family: "Noto Sans CJK SC", sans-serif; line-height: 18px; }
.menubar > button { height: 20px; }
.doc-icon { margin-right: -7px; }
.second-row { display: flex; gap: 14px; width: 100%; height: 18px; }
.mdi { display: flex; gap: 1px; margin-left: auto; padding-right: 1px; }
.mdi button { display: grid; place-items: center; width: 18px; height: 17px; border: 1px solid #9fb0c8; background: #e8effa; }
.mdi svg { width: 12px; height: 12px; }

.toolbar { flex: none; display: flex; align-items: center; height: 31px; padding-left: 3px; border-top: 1px solid #fff; border-bottom: 2px solid #999; overflow: hidden; }
.toolbar > button { flex: none; display: grid; place-items: center; width: 23px; height: 24px; }
.toolbar .drop { width: 13px; color: #8e96a0; }
.toolbar .wide { margin-left: 3px; }
.sep { flex: none; width: 6px; height: 18px; background: linear-gradient(#888, #888) 2px 0 / 1px 100% no-repeat; }
.vgrip { flex: none; width: 7px; margin-right: 2px; align-self: stretch; border: solid #aaa; border-width: 0 1px; background: linear-gradient(90deg, #fff 1px, #f0f0f0 1px 3px, #aaa 3px 4px, #fff 4px); }
.bar-end { align-self: stretch; width: 4px; border-right: 1px solid #888; margin-right: 4px; }
.toolbar .layer-combo { flex: 1 1 0; min-width: 0; display: flex; justify-content: flex-start; align-items: center; gap: 0; padding-left: 2px; border: 1px solid #999; border-right: 0; border-radius: 3px; color: #444; }
.layer-combo span { margin-left: 4px; }
.white-box { width: 10px; height: 10px; border: 1px solid #000; background: #fff; margin-left: 1px; }

.tri { display: block; width: 7px; height: 4px; background: currentColor; clip-path: polygon(0 0, 100% 0, 50% 100%); }
.tri.up { clip-path: polygon(0 100%, 100% 100%, 50% 0); }
.tri.left, .tri.right { width: 4px; height: 7px; }
.tri.left { clip-path: polygon(100% 0, 100% 100%, 0 50%); }
.tri.right { clip-path: polygon(0 0, 0 100%, 100% 50%); }

.workspace { flex: 1; min-height: 0; display: flex; }
.palette { flex: none; width: 202px; display: flex; flex-direction: column; border-right: 1px solid #888; box-shadow: inset -4px 0 #f4f4f4, inset -5px 0 #aaa; }
.palette-head { display: flex; justify-content: space-between; padding: 3px 8px 0 3px; height: 17px; border-right: 5px solid #f0f0f0; }
.mini { display: grid; place-items: center; width: 12px; height: 11px; border: 1px solid #555; border-radius: 2px; font: bold 12px/8px "DejaVu Sans", sans-serif; }
.palette-tools { display: flex; gap: 4px; align-items: center; height: 24px; padding-left: 13px; }
.palette-tools svg { width: 22px; height: 22px; }
.palette-tools .blank { width: 16px; height: 18px; background: #fff; border: 1px solid #ddd; }
.tree { flex: 1; min-height: 0; display: grid; grid-template: minmax(0, 1fr) 17px / minmax(0, 1fr) 16px; margin: 10px 13px 12px 6px; border: 1px solid #555; background: #fff; }
.tree ul { list-style: none; padding-top: 1px; overflow: hidden; background: linear-gradient(#fff, #fff) 0 0 / 12px 8px no-repeat, repeating-linear-gradient(#888 0 1px, transparent 1px 2px) 11px 0 / 1px 100% no-repeat; }
.tree li { position: relative; display: flex; justify-content: space-between; height: 16px; padding-left: 22px; overflow: hidden; background: repeating-linear-gradient(90deg, #888 0 1px, transparent 1px 2px) 12px 8px / 10px 1px no-repeat; font: 12px/16px "Noto Sans CJK SC", sans-serif; }
.tree li.parent::before { content: ""; position: absolute; left: 7px; top: 4px; width: 9px; height: 9px; border: 1px solid #888; background: linear-gradient(#245, #245) 50% / 5px 1px no-repeat, linear-gradient(#245, #245) 50% / 1px 5px no-repeat, #fff; }
.tree label { display: flex; align-items: center; }
.tree b { margin-left: 6px; font: 10px/16px "DejaVu Sans Mono", monospace; }
.tree li > span { flex: none; width: 18px; overflow: hidden; white-space: nowrap; }
.tree input { appearance: none; width: 13px; height: 13px; border: 1px solid #888; background: linear-gradient(135deg, #c5cbd1, #fff); display: grid; place-items: center; }
.tree input:checked::before { content: ""; width: 9px; height: 9px; background: #32569b; clip-path: polygon(0 45%, 20% 35%, 38% 62%, 80% 0, 100% 8%, 45% 100%, 30% 100%); }
.sw { width: 14px; height: 14px; margin-left: 1px; border: 1px solid #999; background: #fff; background-clip: content-box; padding: 1px; }
.blue { background-color: #00f; } .red { background-color: #f00; } .cyan { background-color: #0ff; } .yellow { background-color: #ff0; } .green { background-color: #0f0; } .magenta { background-color: #f0f; } .pink { background-color: #ff8080; }
.vscroll, .hscroll { display: flex; background: #eee; color: #444; }
.vscroll { flex-direction: column; }
.vscroll button { height: 18px; display: grid; place-items: center; }
.thumb { display: block; border: 1px solid #929292; border-radius: 2px; background: linear-gradient(90deg, #f5f5f5, #ddd 50%, #bbb); }
.vscroll .thumb { height: 366px; flex: 0 1 auto; background: repeating-linear-gradient(#666 0 1px, transparent 1px 3px) 50% 50% / 7px 8px no-repeat, linear-gradient(90deg, #f5f5f5, #ddd 50%, #bbb); }
.vscroll .end { margin-top: auto; }
.hscroll { grid-column: 1 / 2; }
.hscroll button { width: 18px; display: grid; place-items: center; }
.hscroll .thumb { width: 66px; height: 15px; background: repeating-linear-gradient(90deg, #666 0 1px, transparent 1px 3px) 50% 50% / 9px 7px no-repeat, linear-gradient(#f5f5f5, #ddd 50%, #bbb); }
.hscroll .end { margin-left: auto; }
.palette-tabs { flex: none; display: flex; height: 22px; margin-right: 5px; margin-bottom: 3px; border-top: 1px solid #777; }
.palette-tabs > button { display: flex; align-items: center; gap: 5px; padding: 0 5px 2px 5px; border-right: 2px solid #888; background: linear-gradient(#f7f7f7, #ccc); font-family: "Noto Sans CJK SC", sans-serif; overflow: hidden; }
.palette-tabs > button:nth-child(3) { flex: 1; min-width: 0; border: 0; padding-right: 0; }
.palette-tabs .on { background: #fff; padding-left: 6px; padding-right: 7px; border-right-width: 1px; }
.tab-nav { flex: none; display: flex; margin: 3px 0; color: #36568e; }
.tab-nav button { display: grid; place-items: center; width: 15px; border: 1px solid #aaa; background: #eef; }

.center { flex: 1; min-width: 0; display: flex; flex-direction: column; }
.stage { flex: 1; min-height: 0; display: flex; padding-bottom: 4px; }
.tools { flex: none; width: 26px; overflow: hidden; }
.strip { border: solid #999; border-width: 0 1px 1px 0; padding-bottom: 5px; box-shadow: inset 1px 0 #fff; }
.hgrip { display: block; height: 7px; margin: 1px 2px; border: solid #999; border-width: 1px 0; background: linear-gradient(#fff 1px, #f0f0f0 1px 2px, #999 2px 3px, #fff 3px); }
.strip button { display: grid; place-items: center; width: 24px; height: 22px; }
.strip .glyph { color: #f00; font: 16px/20px "Noto Sans CJK SC", sans-serif; }
.strip .num { font: bold 12px/20px "Liberation Sans", sans-serif; }
.strip .letter { color: #111; font: 18px/20px "Liberation Sans", sans-serif; }
.hsep { display: block; height: 1px; margin: 2px 3px; background: #888; }
.viewport { flex: 1; min-width: 0; display: flex; flex-direction: column; border-left: 2px solid #555; border-right: 2px solid #fff; margin-right: 1px; }
.drawing { flex: 1; min-height: 0; width: 100%; background: #000; }
.dim { font: 200 50px "DejaVu Sans Light", "DejaVu Sans", sans-serif; fill: #fff; }
.note { font: 16px "Noto Sans CJK SC", sans-serif; fill: #fa3434; }
.layout-tabs { flex: none; display: flex; height: 16px; border-bottom: 1px solid #ccc; overflow: hidden; background: #f0f0f0; }
.layout-tabs button { display: grid; place-items: center; width: 14px; border-right: 1px solid #999; }
.layout-tabs svg { width: 10px; height: 10px; }
.layout-tabs .model { width: 48px; margin-left: 1px; color: #0f0; background: #000; border: 0; clip-path: polygon(0 0, 100% 0, 86% 90%, 9% 90%); font: 12px/15px "Noto Sans CJK SC", sans-serif; }
.layout-tabs .layout { width: 60px; border: 0; font: 11px/15px "DejaVu Sans Mono", monospace; background: linear-gradient(118deg, transparent calc(100% - 6px), #333 calc(100% - 6px) calc(100% - 5px), transparent calc(100% - 5px)); padding-right: 10px; }

.command { flex: none; display: flex; height: 72px; padding: 9px 8px 3px 7px; border-top: 2px solid #888; box-shadow: inset 0 1px #fff; }
.console { position: relative; flex: 1; min-width: 0; margin-left: 2px; font: 16px/18px "Noto Sans CJK SC", sans-serif; color: #222; border: 1px solid #666; border-width: 1px 0 0 1px; }
.console span, .console input { font: 13px/18px "Liberation Mono", monospace; white-space: pre; }
.console span { line-height: 0; }
.history { display: flex; height: 36px; border-bottom: 1px solid #999; background: #fff; }
.log { flex: 1; height: 35px; overflow: hidden; display: flex; flex-direction: column; justify-content: flex-end; padding-bottom: 1px; }
.log p { flex: none; height: 18px; white-space: nowrap; }
.log-scroll { display: flex; flex-direction: column; justify-content: space-around; width: 17px; background: #f0f0f0; color: #444; }
.log-scroll button, .entry-scroll button { display: grid; place-items: center; }
.entry { display: flex; align-items: baseline; height: 19px; background: #fff; }
.entry label { white-space: nowrap; }
.entry input { flex: 1; min-width: 0; height: 18px; padding-left: 16px; outline: 0; }
.entry-scroll { display: flex; align-self: stretch; justify-content: space-around; align-items: center; width: 66px; margin-right: 17px; background: #eee; color: #444; }
.entry-scroll .thumb { width: 15px; height: 15px; }
.highlight { position: absolute; left: -2px; top: 12px; width: 176px; height: 26px; border: 3px solid #fa3434; }

.screen-menu { flex: none; width: 98px; display: flex; flex-direction: column; border-left: 1px solid #aaa; box-shadow: inset 3px 0 #f0f0f0, inset 4px 0 #888; padding: 0 6px 3px 9px; }
.sm-head { display: flex; align-items: center; gap: 4px; height: 14px; }
.sm-head .hgrip { flex: 1; margin: 0; }
.sm-body { flex: 1; min-height: 0; display: flex; gap: 2px; padding-top: 5px; }
.sm-icons { display: flex; flex-direction: column; padding-top: 20px; width: 18px; }
.sm-icons button { display: grid; place-items: center; height: 22px; }
.sm-icons .big { width: 20px; height: 20px; }
.sm-list { flex: 1; display: flex; flex-direction: column; font: 12px/18px "Noto Sans CJK SC", sans-serif; background: #666f8e; margin-bottom: 3px; }
.sm-list > button { flex: none; height: 21px; border: solid #000; border-width: 0 1px 2px 0; background: #f0f0f0; box-shadow: inset 1px 1px #fff; }
.sm-list > .active { height: 20px; margin-right: -3px; border: 2px solid #0a0a9c; background: #fff; color: #1010a8; line-height: 16px; }
.sm-list > .raised { height: 20px; border-bottom-width: 1px; }
.sub { flex: 1; display: flex; flex-direction: column; padding: 4px 4px 0 0; border-bottom: 1px solid #000; color: #fff; text-align: right; }
.sub button { flex: none; height: 26px; text-align: right; }

.status { flex: none; display: flex; align-items: center; gap: 4px; height: 21px; padding-left: 4px; border-top: 1px solid #999; box-shadow: inset 0 1px #fff; font: 12px/16px "Noto Sans CJK SC", sans-serif; overflow: hidden; }
.status output { width: 199px; height: 18px; border: 1px solid #999; font: 10px/16px "DejaVu Sans Mono", monospace; background: #f0eeec; }
.status > button { flex: none; height: 18px; padding: 0 1px; border: 1px solid #888; border-top-color: transparent; border-left-color: transparent; box-shadow: inset 1px 1px #fff; }
.status > .en { font: 10px/16px "DejaVu Sans Mono", monospace; }
.status > .pressed { border-color: #222 transparent transparent #222; background: #f7f7f7; }
.status > .flat { display: flex; align-items: center; gap: 4px; border: 0; box-shadow: none; padding: 0 3px; }
.status > .clean { margin-left: auto; margin-right: 14px; }
.scale { flex: none; margin-left: 10px; }
.watermark { position: absolute; right: 6px; bottom: 8px; font: 16px/18px "Liberation Sans", sans-serif; color: rgba(255, 255, 255, .7); text-shadow: 1px 1px 1px rgba(120, 120, 120, .5); pointer-events: none; }
```
